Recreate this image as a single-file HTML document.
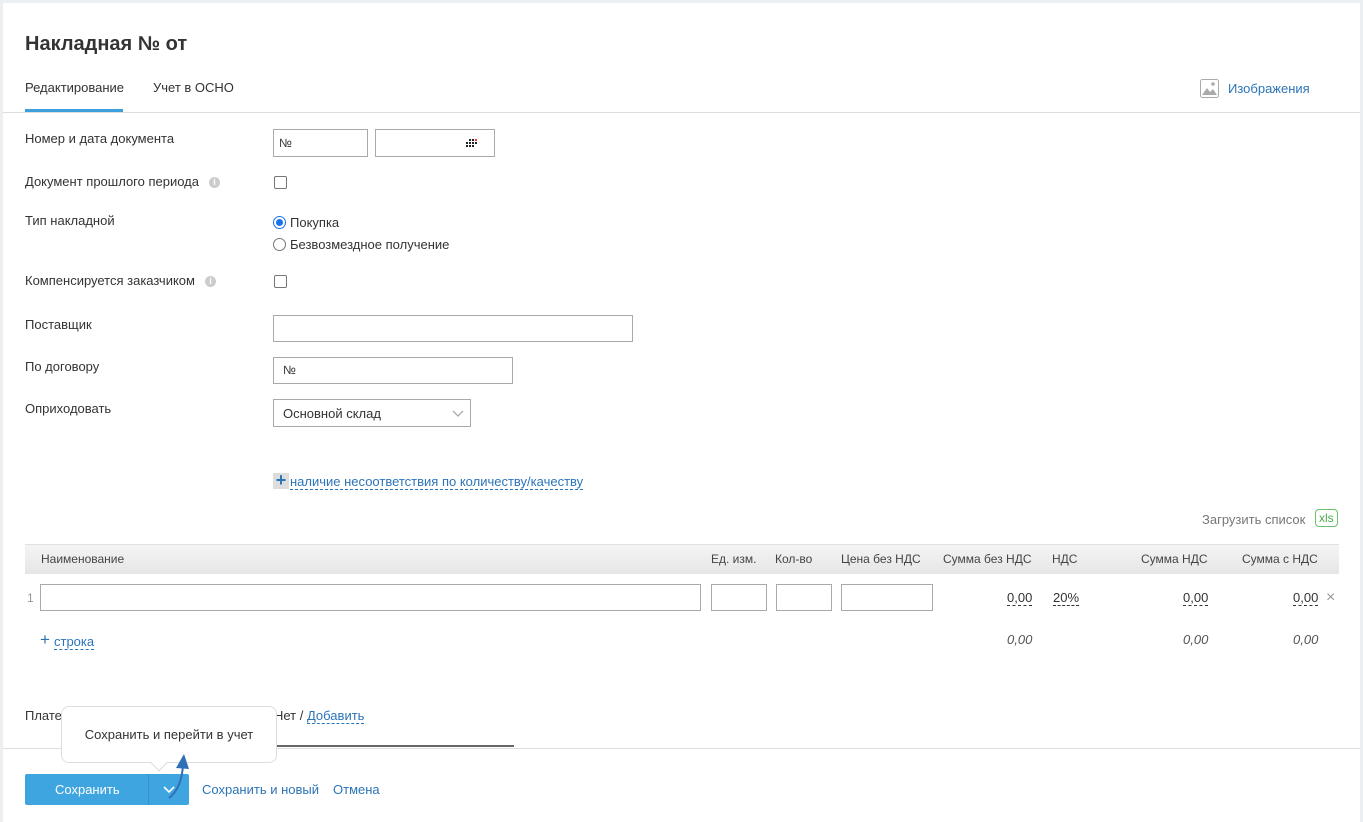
<!DOCTYPE html>
<html><head><meta charset="utf-8"><style>
*{box-sizing:border-box;margin:0;padding:0}
body{width:1363px;height:822px;background:#eceff2;font-family:"Liberation Sans",Arial,sans-serif;font-size:13px;color:#333;position:relative;overflow:hidden}
.panel{position:absolute;left:3px;top:3px;width:1357px;height:819px;background:#fff}
.a{position:absolute;white-space:nowrap}
.inp{position:absolute;border:1px solid #a9a9a9;background:#fff;height:28px}
.lbl{position:absolute;left:25px;color:#333}
.cb{position:absolute;width:13px;height:13px;border:1px solid #777;border-radius:2px;background:#fff}
.link{color:#2c74b8}
.dash{border-bottom:1px dashed #2c74b8}
.info{display:inline-block;width:11px;height:11px;border-radius:50%;background:#ccc;color:#fff;font-size:9px;text-align:center;line-height:11px;font-weight:bold;margin-left:10px;vertical-align:1px}
.th{position:absolute;top:552px;color:#444;font-size:12px}
.num{position:absolute;top:590px;color:#333;border-bottom:1px dashed #333;line-height:15px}
.tot{position:absolute;top:632px;color:#555;font-style:italic}
</style></head><body>
<div class="panel"></div>
<div class="a" style="left:25px;top:33px;font-size:20px;font-weight:bold;color:#333">Накладная № от</div>
<div class="a" style="left:25px;top:80px;color:#333">Редактирование</div>
<div class="a" style="left:25px;top:109px;width:98px;height:3px;background:#3e9fdd"></div>
<div class="a" style="left:153px;top:80px;color:#333">Учет в ОСНО</div>
<div class="a" style="left:3px;top:112px;width:1357px;height:1px;background:#ddd"></div>
<svg class="a" style="left:1200px;top:79px" width="19" height="19" viewBox="0 0 19 19"><rect x="0.5" y="0.5" width="18" height="18" rx="2" fill="#fff" stroke="#aaa"/><path d="M2 16 L7 9 L10 13 L13 10 L17 16Z" fill="#aaa"/><circle cx="13" cy="5" r="1.8" fill="#aaa"/></svg>
<div class="a link" style="left:1228px;top:81px">Изображения</div>

<div class="lbl a" style="top:131px">Номер и дата документа</div>
<div class="inp" style="left:273px;top:129px;width:95px;padding:6px 5px;font-size:12px">№</div>
<div class="inp" style="left:375px;top:129px;width:120px"><svg style="position:absolute;left:90px;top:9px" width="12" height="8"><g fill="#222"><rect x="3" y="0" width="2" height="2"/><rect x="6" y="0" width="2" height="2"/><rect x="0" y="3" width="2" height="2"/><rect x="3" y="3" width="2" height="2"/><rect x="6" y="3" width="2" height="2"/><rect x="9" y="3" width="2" height="2"/><rect x="0" y="6" width="2" height="2"/><rect x="3" y="6" width="2" height="2"/><rect x="6" y="6" width="2" height="2"/></g><rect x="9" y="0" width="2" height="2" fill="#e33"/></svg></div>

<div class="lbl a" style="top:174px">Документ прошлого периода<span class="info">i</span></div>
<div class="cb" style="left:274px;top:176px"></div>

<div class="lbl a" style="top:213px">Тип накладной</div>
<div class="a" style="left:273px;top:216px;width:13px;height:13px;border-radius:50%;border:1px solid #1a73e8;background:#fff"><div style="position:absolute;left:2px;top:2px;width:7px;height:7px;border-radius:50%;background:#1a73e8"></div></div>
<div class="a" style="left:290px;top:215px">Покупка</div>
<div class="a" style="left:273px;top:238px;width:13px;height:13px;border-radius:50%;border:1px solid #777;background:#fff"></div>
<div class="a" style="left:290px;top:237px">Безвозмездное получение</div>

<div class="lbl a" style="top:273px">Компенсируется заказчиком<span class="info">i</span></div>
<div class="cb" style="left:274px;top:275px"></div>

<div class="lbl a" style="top:317px">Поставщик</div>
<div class="inp" style="left:273px;top:315px;width:360px;height:27px"></div>
<div class="lbl a" style="top:359px">По договору</div>
<div class="inp" style="left:273px;top:357px;width:240px;height:27px;padding:5px 9px;font-size:12px">№</div>
<div class="lbl a" style="top:401px">Оприходовать</div>
<div class="inp" style="left:273px;top:399px;width:198px;height:28px;padding:6px 9px">Основной склад<svg style="position:absolute;right:6px;top:10px" width="12" height="8"><path d="M1 1L6 6L11 1" fill="none" stroke="#aaa" stroke-width="1.3"/></svg></div>

<div class="a" style="left:273px;top:473px;width:16px;height:16px;background:#ddd;color:#2c74b8;font-size:18px;line-height:15px;text-align:center;font-weight:bold">+</div>
<div class="a link dash" style="left:290px;top:474px;line-height:15px">наличие несоответствия по количеству/качеству</div>

<div class="a" style="left:1202px;top:512px;color:#777">Загрузить список</div>
<div class="a" style="left:1315px;top:509px;border:1px solid #6bc06b;border-radius:4px;color:#4aa84a;padding:1px 3px;font-size:12px">xls</div>

<div class="a" style="left:25px;top:544px;width:1314px;height:30px;background:linear-gradient(#f4f4f4,#e6e6e6);border-top:1px solid #e0e0e0"></div>
<div class="th" style="left:41px">Наименование</div>
<div class="th" style="left:711px">Ед. изм.</div>
<div class="th" style="left:775px">Кол-во</div>
<div class="th" style="left:841px">Цена без НДС</div>
<div class="th" style="left:943px">Сумма без НДС</div>
<div class="th" style="left:1052px">НДС</div>
<div class="th" style="left:1141px">Сумма НДС</div>
<div class="th" style="left:1242px">Сумма с НДС</div>

<div class="a" style="left:27px;top:591px;color:#999;font-size:12px">1</div>
<div class="inp" style="left:40px;top:584px;width:661px;height:27px"></div>
<div class="inp" style="left:711px;top:584px;width:56px;height:27px"></div>
<div class="inp" style="left:776px;top:584px;width:56px;height:27px"></div>
<div class="inp" style="left:841px;top:584px;width:92px;height:27px"></div>
<div class="num" style="left:1007px">0,00</div>
<div class="num" style="left:1053px">20%</div>
<div class="num" style="left:1183px">0,00</div>
<div class="num" style="left:1293px">0,00</div>
<div class="a" style="left:1326px;top:589px;color:#999;font-size:16px">×</div>

<div class="a" style="left:40px;top:632px;color:#2c74b8;font-size:17px;line-height:16px">+</div>
<div class="a link dash" style="left:54px;top:634px;line-height:15px">строка</div>
<div class="tot" style="left:1007px">0,00</div>
<div class="tot" style="left:1183px">0,00</div>
<div class="tot" style="left:1293px">0,00</div>

<div class="a" style="left:25px;top:708px">Плате</div>
<div class="a" style="left:274px;top:708px">Нет / <span class="link dash">Добавить</span></div>
<div class="a" style="left:264px;top:745px;width:250px;height:2px;background:#666"></div>
<div class="a" style="left:3px;top:748px;width:1357px;height:1px;background:#ddd"></div>

<div class="a" style="left:61px;top:706px;width:216px;height:57px;background:#fff;border:1px solid #ddd;border-radius:8px;text-align:center;line-height:55px;color:#333">Сохранить и перейти в учет</div>
<div class="a" style="left:153px;top:757px;width:12px;height:12px;background:#fff;border-right:1px solid #ddd;border-bottom:1px solid #ddd;transform:rotate(45deg)"></div>

<div class="a" style="left:25px;top:774px;width:164px;height:31px;background:#3ea5e0;border-radius:2px"></div>
<div class="a" style="left:148px;top:774px;width:1px;height:31px;background:#3591c7"></div>
<div class="a" style="left:55px;top:782px;color:#fff">Сохранить</div>
<svg class="a" style="left:163px;top:786px" width="12" height="8"><path d="M1 1L6 6L11 1" fill="none" stroke="#fff" stroke-width="1.6"/></svg>
<svg class="a" style="left:165px;top:750px" width="30" height="50"><path d="M4 48 Q17 38 18 14" fill="none" stroke="#2f6fb6" stroke-width="2"/><path d="M11 18 L19 4 L24 19Z" fill="#2f6fb6"/></svg>
<div class="a link" style="left:202px;top:782px">Сохранить и новый</div>
<div class="a link" style="left:333px;top:782px">Отмена</div>
</body></html>
